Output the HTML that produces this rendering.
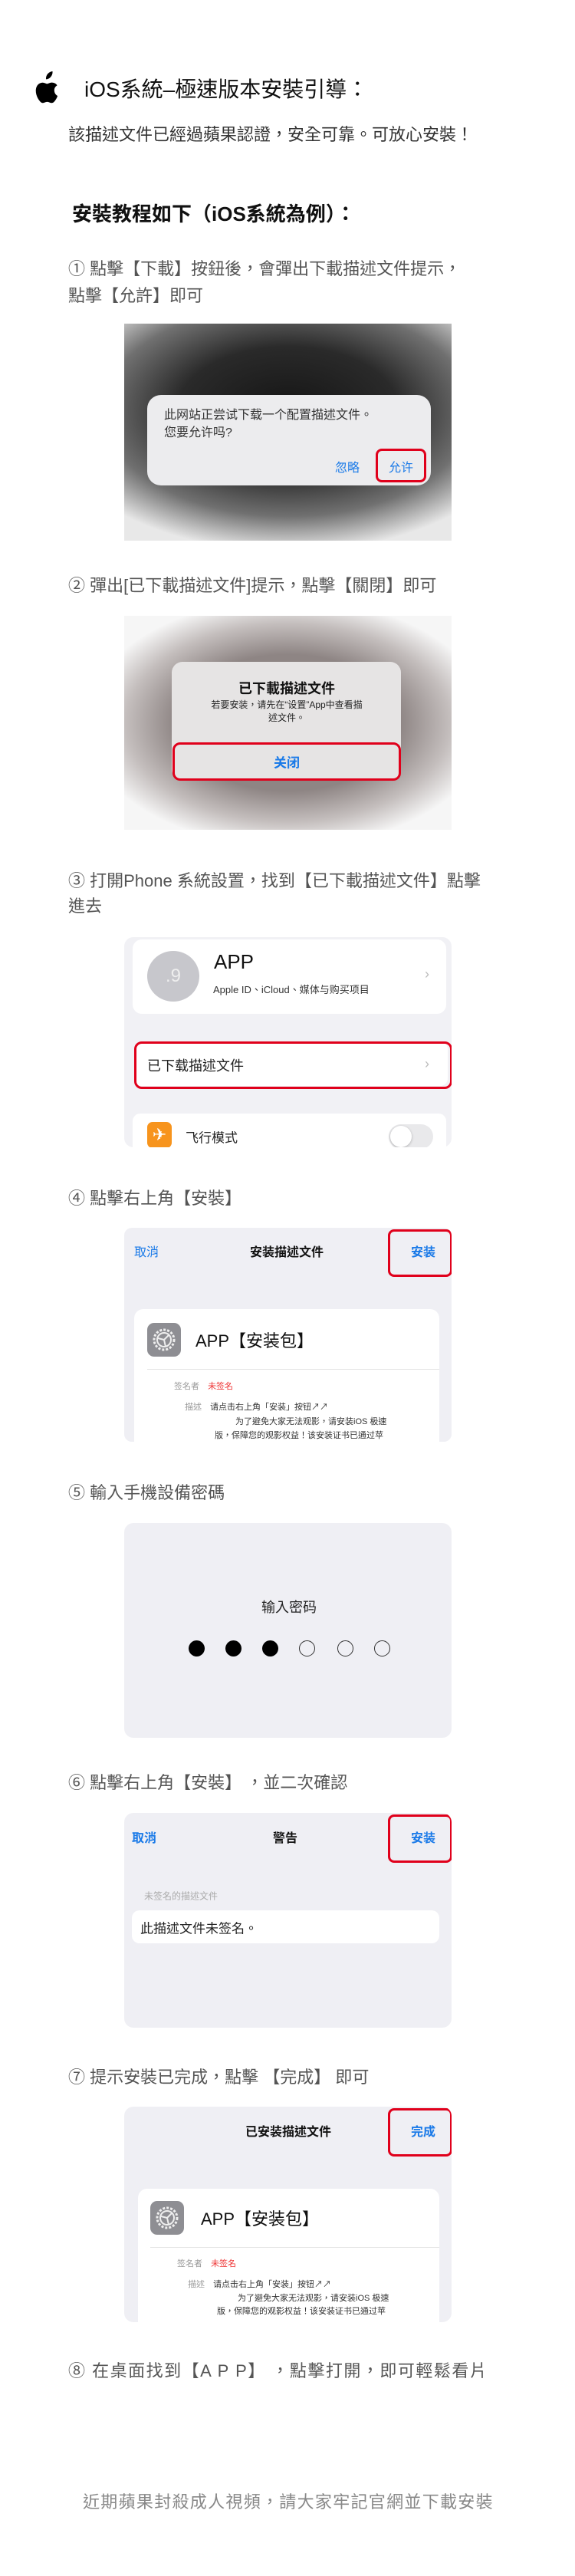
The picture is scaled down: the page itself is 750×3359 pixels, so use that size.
<!DOCTYPE html>
<html><head><meta charset="utf-8">
<style>
*{margin:0;padding:0;box-sizing:border-box}
body{width:750px;height:3359px;background:#fff;position:relative;overflow:hidden;font-family:"Liberation Sans","Noto Sans CJK TC",sans-serif}
.a{position:absolute;white-space:nowrap}
.step{position:absolute;left:89px;font-size:22px;line-height:34px;color:#555;white-space:nowrap}
.img{position:absolute;left:162px;width:427px;overflow:hidden}
.red{position:absolute;border:3px solid #e0001b;border-radius:8px}
.blue{color:#1a7ae8}
.c{position:absolute;white-space:nowrap;transform:translate(-50%,-50%)}
.m{position:absolute;white-space:nowrap;transform:translateY(-50%)}
.gear{position:absolute;background:#8e8e93;border-radius:9px}
.small{font-size:11px;color:#333}
</style></head><body>

<svg class="a" style="left:44px;top:93px" width="36" height="43" viewBox="0 0 36 43">
<path d="M24.5 0C24.8 3.2 23.6 5.7 22 7.5 20.4 9.3 18.2 10.5 16 10.3 15.7 7.3 17 4.6 18.5 3 20.2 1.2 22.6 0.1 24.5 0Z" fill="#000"/>
<path d="M29.8 22.8C29.7 18.4 33.4 16.3 33.6 16.2 31.5 13.1 28.3 12.7 27.2 12.7 24.4 12.4 21.8 14.3 20.4 14.3 19 14.3 16.8 12.7 14.5 12.8 11.5 12.8 8.7 14.6 7.2 17.2 4.1 22.6 6.4 30.6 9.4 34.9 10.9 37 12.6 39.4 14.9 39.3 17.1 39.2 18 37.9 20.6 37.9 23.3 37.9 24.1 39.3 26.4 39.3 28.8 39.2 30.3 37.1 31.7 35 33.4 32.5 34.1 30.1 34.1 30 34.1 30 29.9 28.3 29.8 22.8Z" fill="#000" transform="translate(-3,2)"/>
</svg>
<div class="a" style="left:110px;top:99px;font-size:28px;line-height:36px;color:#111">iOS系統–極速版本安裝引導：</div>
<div class="a" style="left:89px;top:160px;font-size:22px;line-height:32px;color:#333">該描述文件已經過蘋果認證，安全可靠。可放心安裝！</div>
<div class="a" style="left:94px;top:262px;font-size:26px;line-height:34px;color:#111;font-weight:bold">安裝教程如下（iOS系統為例）：</div>

<div class="step" style="top:334px">① 點擊【下載】按鈕後，會彈出下載描述文件提示，</div>
<div class="step" style="top:369px">點擊【允許】即可</div>

<!-- image1 -->
<div class="img" style="top:422px;height:283px;background:radial-gradient(ellipse 75% 65% at 50% 40%,#151515 0%,#2a2a2a 45%,#707070 75%,#e8e8e8 100%)">
  <div class="a" style="left:30px;top:93px;width:370px;height:118px;background:#ececee;border-radius:18px"></div>
  <div class="a" style="left:52px;top:108px;font-size:16px;line-height:23px;color:#333">此网站正尝试下载一个配置描述文件。<br>您要允许吗?</div>
  <div class="a blue" style="left:275px;top:174px;font-size:16px">忽略</div>
  <div class="a blue" style="left:345px;top:174px;font-size:16px">允许</div>
  <div class="red" style="left:328px;top:163px;width:66px;height:44px"></div>
</div>

<div class="step" style="top:747px">② 彈出[已下載描述文件]提示，點擊【關閉】即可</div>

<!-- image2 -->
<div class="img" style="top:803px;height:279px;background:radial-gradient(ellipse 62% 58% at 50% 50%,#8f8786 0%,#8e8584 55%,#c4bebd 80%,#f6f6f6 100%)">
  <div class="a" style="left:62px;top:60px;width:299px;height:154px;background:#e6e4e4;border-radius:14px"></div>
  <div class="c" style="left:212px;top:94px;font-size:18px;font-weight:bold;color:#111">已下載描述文件</div>
  <div class="c" style="left:212px;top:125px;font-size:12px;line-height:17px;color:#222;text-align:center">若要安装，请先在“设置”App中查看描<br>述文件。</div>
  <div class="c blue" style="left:212px;top:190px;font-size:17px;font-weight:bold">关闭</div>
  <div class="red" style="left:63px;top:165px;width:298px;height:50px;border-radius:10px"></div>
</div>

<div class="step" style="top:1132px">③ 打開Phone 系統設置，找到【已下載描述文件】點擊</div>
<div class="step" style="top:1165px">進去</div>

<!-- image3 -->
<div class="img" style="top:1222px;height:274px;background:#f1f1f5;border-radius:12px">
  <div class="a" style="left:11px;top:3px;width:409px;height:97px;background:#fff;border-radius:12px"></div>
  <div class="a" style="left:30px;top:18px;width:68px;height:66px;border-radius:50%;background:#c7c7cc;color:#eee;font-size:24px;text-align:center;line-height:66px">.9</div>
  <div class="a" style="left:117px;top:17px;font-size:26px;color:#111">APP</div>
  <div class="a" style="left:116px;top:58px;font-size:13px;color:#333">Apple ID、iCloud、媒体与购买项目</div>
  <div class="a" style="left:392px;top:38px;font-size:18px;color:#bbb">›</div>
  <div class="a" style="left:13px;top:136px;width:409px;height:58px;background:#fff;border-radius:10px"></div>
  <div class="m" style="left:30px;top:167px;font-size:18px;color:#222">已下载描述文件</div>
  <div class="a" style="left:392px;top:155px;font-size:18px;color:#bbb">›</div>
  <div class="red" style="left:13px;top:136px;width:415px;height:62px;border-radius:10px"></div>
  <div class="a" style="left:11px;top:230px;width:409px;height:60px;background:#fff;border-radius:10px"></div>
  <div class="a" style="left:30px;top:241px;width:32px;height:34px;background:#f7941d;border-radius:7px;color:#fff;font-size:22px;text-align:center;line-height:34px">✈</div>
  <div class="m" style="left:80px;top:260px;font-size:17px;color:#222">飞行模式</div>
  <div class="a" style="left:345px;top:244px;width:58px;height:32px;border-radius:16px;background:#e9e9eb"><div style="position:absolute;left:2px;top:2px;width:28px;height:28px;border-radius:50%;background:#fff;box-shadow:0 1px 3px rgba(0,0,0,.25)"></div></div>
</div>

<div class="step" style="top:1546px">④ 點擊右上角【安裝】</div>

<!-- image4 -->
<div class="img" style="top:1601px;height:279px;background:#efeff4;border-radius:10px">
  <div class="m blue" style="left:13px;top:30px;font-size:16px">取消</div>
  <div class="c" style="left:212px;top:30px;font-size:16px;font-weight:bold;color:#111">安装描述文件</div>
  <div class="m blue" style="left:374px;top:30px;font-size:16px;font-weight:bold">安装</div>
  <div class="red" style="left:344px;top:2px;width:84px;height:62px"></div>
  <div class="a" style="left:13px;top:106px;width:398px;height:190px;background:#fff;border-radius:12px"></div>
  <div class="gear" style="left:30px;top:124px;width:44px;height:44px"><svg width="44" height="44" viewBox="0 0 44 44"><circle cx="22" cy="22" r="13" fill="none" stroke="#eee" stroke-width="3" stroke-dasharray="3 2"/><circle cx="22" cy="22" r="9" fill="none" stroke="#eee" stroke-width="2"/><path d="M22 22L14 20M22 22L28 16M22 22L24 31" stroke="#eee" stroke-width="2"/></svg></div>
  <div class="m" style="left:93px;top:146px;font-size:22px;color:#111">APP【安装包】</div>
  <div class="a" style="left:30px;top:184px;width:381px;height:1px;background:#e4e4e4"></div>
  <div class="m small" style="left:65px;top:206px;color:#999">签名者 <span style="color:#e33;margin-left:8px">未签名</span></div>
  <div class="m small" style="left:79px;top:233px"><span style="color:#999">描述</span> <span style="margin-left:8px">请点击右上角「安装」按钮↗↗</span></div>
  <div class="m small" style="left:145px;top:252px">为了避免大家无法观影，请安装iOS 极速</div>
  <div class="m small" style="left:118px;top:270px">版，保障您的观影权益！该安装证书已通过苹</div>
</div>

<div class="step" style="top:1930px">⑤ 輸入手機設備密碼</div>

<!-- image5 -->
<div class="img" style="top:1986px;height:280px;background:#efeff4;border-radius:12px">
  <div class="c" style="left:215px;top:109px;font-size:18px;color:#222">输入密码</div>
  <div class="a" style="left:84px;top:153px;width:21px;height:21px;border-radius:50%;background:#000"></div>
  <div class="a" style="left:132px;top:153px;width:21px;height:21px;border-radius:50%;background:#000"></div>
  <div class="a" style="left:180px;top:153px;width:21px;height:21px;border-radius:50%;background:#000"></div>
  <div class="a" style="left:228px;top:153px;width:21px;height:21px;border-radius:50%;border:1.5px solid #333"></div>
  <div class="a" style="left:278px;top:153px;width:21px;height:21px;border-radius:50%;border:1.5px solid #333"></div>
  <div class="a" style="left:326px;top:153px;width:21px;height:21px;border-radius:50%;border:1.5px solid #333"></div>
</div>

<div class="step" style="top:2308px">⑥ 點擊右上角【安裝】 ，並二次確認</div>

<!-- image6 -->
<div class="img" style="top:2364px;height:280px;background:#efeff4;border-radius:12px">
  <div class="m blue" style="left:10px;top:31px;font-size:16px;font-weight:bold">取消</div>
  <div class="c" style="left:210px;top:31px;font-size:16px;font-weight:bold;color:#111">警告</div>
  <div class="m blue" style="left:374px;top:31px;font-size:16px;font-weight:bold">安装</div>
  <div class="red" style="left:344px;top:2px;width:84px;height:63px"></div>
  <div class="m" style="left:26px;top:108px;font-size:12px;color:#aaa">未签名的描述文件</div>
  <div class="a" style="left:10px;top:127px;width:401px;height:43px;background:#fff;border-radius:10px"></div>
  <div class="m" style="left:21px;top:149px;font-size:17px;color:#222">此描述文件未签名。</div>
</div>

<div class="step" style="top:2692px">⑦ 提示安裝已完成，點擊 【完成】 即可</div>

<!-- image7 -->
<div class="img" style="top:2747px;height:281px;background:#efeff4;border-radius:12px">
  <div class="c" style="left:214px;top:31px;font-size:16px;font-weight:bold;color:#111">已安装描述文件</div>
  <div class="m blue" style="left:374px;top:31px;font-size:16px;font-weight:bold">完成</div>
  <div class="red" style="left:344px;top:2px;width:84px;height:63px"></div>
  <div class="a" style="left:18px;top:107px;width:393px;height:190px;background:#fff;border-radius:12px"></div>
  <div class="gear" style="left:34px;top:123px;width:44px;height:44px"><svg width="44" height="44" viewBox="0 0 44 44"><circle cx="22" cy="22" r="13" fill="none" stroke="#eee" stroke-width="3" stroke-dasharray="3 2"/><circle cx="22" cy="22" r="9" fill="none" stroke="#eee" stroke-width="2"/><path d="M22 22L14 20M22 22L28 16M22 22L24 31" stroke="#eee" stroke-width="2"/></svg></div>
  <div class="m" style="left:100px;top:145px;font-size:22px;color:#111">APP【安装包】</div>
  <div class="a" style="left:34px;top:183px;width:377px;height:1px;background:#e4e4e4"></div>
  <div class="m small" style="left:69px;top:204px;color:#999">签名者 <span style="color:#e33;margin-left:8px">未签名</span></div>
  <div class="m small" style="left:83px;top:231px"><span style="color:#999">描述</span> <span style="margin-left:8px">请点击右上角「安装」按钮↗↗</span></div>
  <div class="m small" style="left:148px;top:249px">为了避免大家无法观影，请安装iOS 极速</div>
  <div class="m small" style="left:121px;top:266px">版，保障您的观影权益！该安装证书已通过苹</div>
</div>

<div class="step" style="top:3075px;letter-spacing:1.5px">⑧ 在桌面找到【A P P】 ，點擊打開，即可輕鬆看片</div>

<div class="a" style="left:108px;top:3245px;font-size:22px;color:#888;letter-spacing:1.3px">近期蘋果封殺成人視頻，請大家牢記官網並下載安裝</div>
</body></html>
